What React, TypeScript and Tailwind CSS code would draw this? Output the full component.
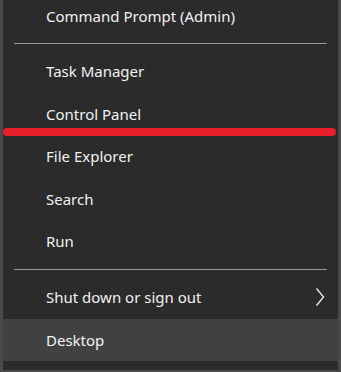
const Row = ({ label, active = false, arrow = false }: { label: string; active?: boolean; arrow?: boolean }) => {
  return (
    <div
      className={`h-[42.5px] flex items-center justify-between pl-[43px] pr-[13px] ${active ? "bg-[#414141]" : ""}`}
    >
      <span className="text-[15px] text-[#f2f2f2]">{label}</span>
      {arrow && (
        <svg width="10" height="20" viewBox="0 0 10 20" fill="none">
          <path d="M1.5 1.5 L8.5 10 L1.5 18.5" stroke="#e6e6e6" strokeWidth="1.4" />
        </svg>
      )}
    </div>
  );
};

const Separator = ({ top, bottom }: { top: string; bottom: string }) => {
  return <div className={`h-px bg-[#9a9a9a] mx-[11px] ${top} ${bottom}`} />;
};

export default function App() {
  return (
    <div
      className="relative w-[341px] h-[372px] bg-[#2b2b2b] border-l-[3px] border-r-[3px] border-b-[2px] border-[#4a4a4a] overflow-hidden"
      style={{ fontFamily: '"Noto Sans", "Open Sans", sans-serif' }}
    >
      <div className="h-[33px] flex items-center pl-[43px]">
        <span className="text-[15px] text-[#f2f2f2]">Command Prompt (Admin)</span>
      </div>
      <Separator top="mt-[10px]" bottom="mb-[6px]" />
      <Row label="Task Manager" />
      <Row label="Control Panel" />
      <Row label="File Explorer" />
      <Row label="Search" />
      <Row label="Run" />
      <Separator top="mt-[6.5px]" bottom="mb-[6px]" />
      <Row label="Shut down or sign out" arrow />
      <Row label="Desktop" active />

      {/* red annotation underline */}
      <div className="absolute left-0 top-[128px] w-[333px] h-[8px] rounded-full bg-[#e8202a]" />
    </div>
  );
}
